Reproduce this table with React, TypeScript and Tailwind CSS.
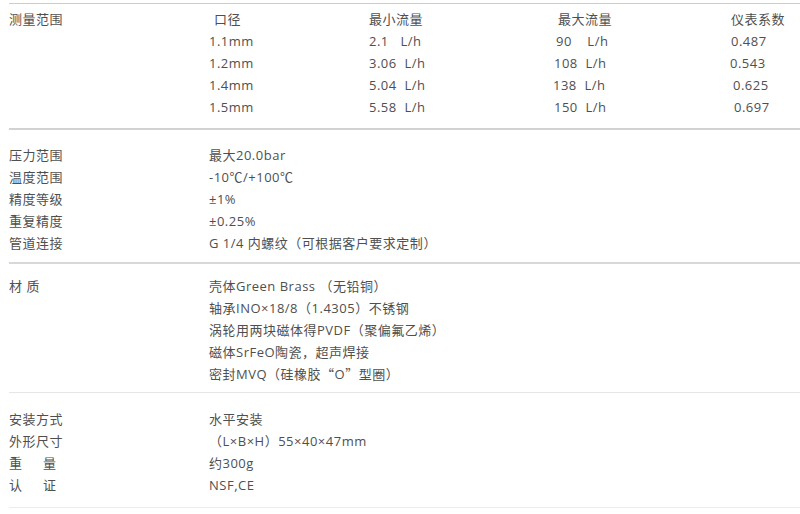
const flowRows = [
  { d: "1.1mm", min: "2.1   L/h", max: "90    L/h", maxPad: "pl-[3px]", k: "0.487", kPad: "pl-[2px]" },
  { d: "1.2mm", min: "3.06  L/h", max: "108  L/h", maxPad: "pl-[1px]", k: "0.543", kPad: "pl-[1px]" },
  { d: "1.4mm", min: "5.04  L/h", max: "138  L/h", maxPad: "pl-0", k: "0.625", kPad: "pl-[4px]" },
  { d: "1.5mm", min: "5.58  L/h", max: "150  L/h", maxPad: "pl-[1px]", k: "0.697", kPad: "pl-[5px]" },
];

// full-width punctuation drawn with the CJK face
function Cjk({ children }: { children: React.ReactNode }) {
  return <span className="font-['Noto_Sans_CJK_SC',sans-serif]">{children}</span>;
}

function Row({ label, children }: { label: React.ReactNode; children: React.ReactNode }) {
  return (
    <div className="grid grid-cols-[200px_1fr] h-[22px] items-center">
      <div className="whitespace-pre">{label}</div>
      <div className="whitespace-pre">{children}</div>
    </div>
  );
}

export default function App() {
  return (
    <div className="w-[800px] h-[514px] bg-white text-[13px] tracking-[0.5px] text-[#4f4f4f] pl-[9px] pt-[3px] leading-[22px] font-['Open_Sans','Noto_Sans_CJK_SC',sans-serif]">
      {/* 测量范围 */}
      <section className="border-t border-[#cdcdcd] pt-[4px] pb-[10px]">
        <div className="grid grid-cols-[200px_160px_184px_176px_1fr] h-[22px] items-center">
          <div>测量范围</div>
          <div className="pl-[5px]">口径</div>
          <div>最小流量</div>
          <div className="pl-[5px]">最大流量</div>
          <div className="pl-[2px]">仪表系数</div>
        </div>
        {flowRows.map((r) => (
          <div key={r.d} className="grid grid-cols-[200px_160px_184px_176px_1fr] h-[22px] items-center whitespace-pre">
            <div />
            <div>{r.d}</div>
            <div>{r.min}</div>
            <div className={r.maxPad}>{r.max}</div>
            <div className={r.kPad}>{r.k}</div>
          </div>
        ))}
      </section>

      {/* 压力 / 温度 */}
      <section className="border-t-2 border-[#d2d2d2] pt-[14px] pb-[8px]">
        <Row label="压力范围">最大20.0bar</Row>
        <Row label="温度范围">-10℃/+100℃</Row>
        <Row label="精度等级">±1%</Row>
        <Row label="重复精度">±0.25%</Row>
        <Row label="管道连接">G 1/4 内螺纹<Cjk>（</Cjk>可根据客户要求定制<Cjk>）</Cjk></Row>
      </section>

      {/* 材质 */}
      <section className="border-t-2 border-[#d8d8d8] pt-[11px] pb-[7px]">
        <Row label="材 质">壳体Green Brass <Cjk>（</Cjk>无铅铜<Cjk>）</Cjk></Row>
        <Row label="">轴承INO×18/8<Cjk>（</Cjk>1.4305<Cjk>）</Cjk>不锈钢</Row>
        <Row label="">涡轮用两块磁体得PVDF<Cjk>（</Cjk>聚偏氟乙烯<Cjk>）</Cjk></Row>
        <Row label="">磁体SrFeO陶瓷<Cjk>，</Cjk>超声焊接</Row>
        <Row label="">密封MVQ<Cjk>（</Cjk>硅橡胶<Cjk>“</Cjk>O<Cjk>”</Cjk>型圈<Cjk>）</Cjk></Row>
      </section>

      {/* 安装 */}
      <section className="border-t border-[#e6e6e6] pt-[15px] pb-[11px]">
        <Row label="安装方式">水平安装</Row>
        <Row label="外形尺寸"><Cjk>（</Cjk>L×B×H<Cjk>）</Cjk>55×40×47mm</Row>
        <Row label={<span className="tracking-[21px]">重量</span>}>约300g</Row>
        <Row label={<span className="tracking-[21px]">认证</span>}>NSF,CE</Row>
      </section>
      <div className="border-t border-[#f1e9ea]" />
    </div>
  );
}
